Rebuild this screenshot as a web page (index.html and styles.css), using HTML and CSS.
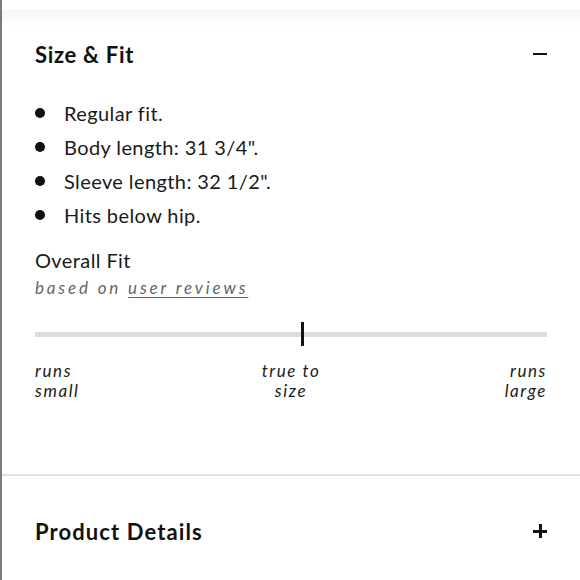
FILE: index.html
```html
<!DOCTYPE html>
<html lang="en">
<head>
<meta charset="utf-8">
<title>Size &amp; Fit</title>
<link rel="stylesheet" href="styles.css">
</head>
<body>
<div class="panel">
  <div class="shade"></div>
  <section class="acc">
    <div class="acc-head">
      <h2 class="acc-title">Size &amp; Fit</h2>
      <span class="icon-minus"></span>
    </div>
    <ul class="facts">
      <li>Regular fit.</li>
      <li>Body length: 31 3/4".</li>
      <li>Sleeve length: 32 1/2".</li>
      <li>Hits below hip.</li>
    </ul>
    <div class="fit">
      <div class="fit-title">Overall Fit</div>
      <div class="fit-sub">based on <a href="#" class="fit-link">user reviews</a></div>
      <div class="scale">
        <div class="track"></div>
        <div class="marker" style="left: 51.9%"></div>
      </div>
      <div class="labels">
        <span class="lab lab-l">runs<br>small</span>
        <span class="lab lab-c">true to<br>size</span>
        <span class="lab lab-r">runs<br>large</span>
      </div>
    </div>
  </section>
  <section class="acc acc-closed">
    <div class="acc-head">
      <h2 class="acc-title acc-title-wide">Product Details</h2>
      <span class="icon-plus"></span>
    </div>
  </section>
</div>
</body>
</html>
```
FILE: styles.css
```css
html, body {
  margin: 0;
  padding: 0;
  background: #fff;
}
body {
  font-family: "Lato", "Open Sans", sans-serif;
  color: #111;
}
.panel {
  border-left: 2px solid #7a7a7a;
  height: 580px;
  box-sizing: border-box;
  overflow: hidden;
}
.shade {
  margin-top: 10px;
  height: 16px;
  background: linear-gradient(#f4f4f4, #ffffff);
}
.acc {
  padding: 0 33px;
}
.acc-head {
  display: flex;
  align-items: center;
  justify-content: space-between;
  height: 50px;
  margin-top: 3px;
}
.acc-title {
  margin: 0;
  font-size: 22px;
  font-weight: 700;
  letter-spacing: 0.7px;
  color: #111;
}
.acc-title-wide {
  letter-spacing: 1.1px;
}
.icon-minus {
  width: 14px;
  height: 2.5px;
  background: #111;
}
.icon-plus {
  position: relative;
  width: 14px;
  height: 14px;
}
.icon-plus::before,
.icon-plus::after {
  content: "";
  position: absolute;
  background: #111;
}
.icon-plus::before {
  left: 0;
  top: 6px;
  width: 14px;
  height: 2.5px;
}
.icon-plus::after {
  left: 6px;
  top: 0;
  width: 2.5px;
  height: 14px;
}
.facts {
  list-style: none;
  margin: 17px 0 0;
  padding: 0;
}
.facts li {
  display: flex;
  align-items: center;
  height: 34px;
  font-size: 20px;
  letter-spacing: 0.4px;
  color: #1a1a1a;
}
.facts li::before {
  content: "";
  width: 10px;
  height: 10px;
  border-radius: 50%;
  background: #111;
  margin-right: 19px;
  flex: none;
}
.fit {
  margin-top: 15px;
}
.fit-title {
  font-size: 20px;
  line-height: 26px;
  letter-spacing: 0.4px;
  color: #1a1a1a;
}
.fit-sub {
  margin-top: 3px;
  font-size: 17px;
  line-height: 24px;
  font-style: italic;
  letter-spacing: 2.85px;
  color: #666;
}
.fit-link {
  color: #666;
  text-decoration: underline;
  text-underline-offset: 3px;
}
.scale {
  position: relative;
  height: 24px;
  margin-top: 22px;
  display: flex;
  align-items: center;
}
.track {
  flex: 1;
  height: 5px;
  background: #dcdcdc;
}
.marker {
  position: absolute;
  top: 0;
  width: 3px;
  height: 24px;
  background: #111;
}
.labels {
  display: grid;
  grid-template-columns: 1fr 1fr 1fr;
  margin-top: 15px;
  font-size: 17px;
  line-height: 20px;
  font-style: italic;
  letter-spacing: 1.6px;
  color: #1a1a1a;
}
.lab-c {
  text-align: center;
}
.lab-r {
  text-align: right;
}
.acc-closed {
  border-top: 2px solid #e2e2e2;
  margin-top: 73px;
  padding-top: 27px;
}
```
